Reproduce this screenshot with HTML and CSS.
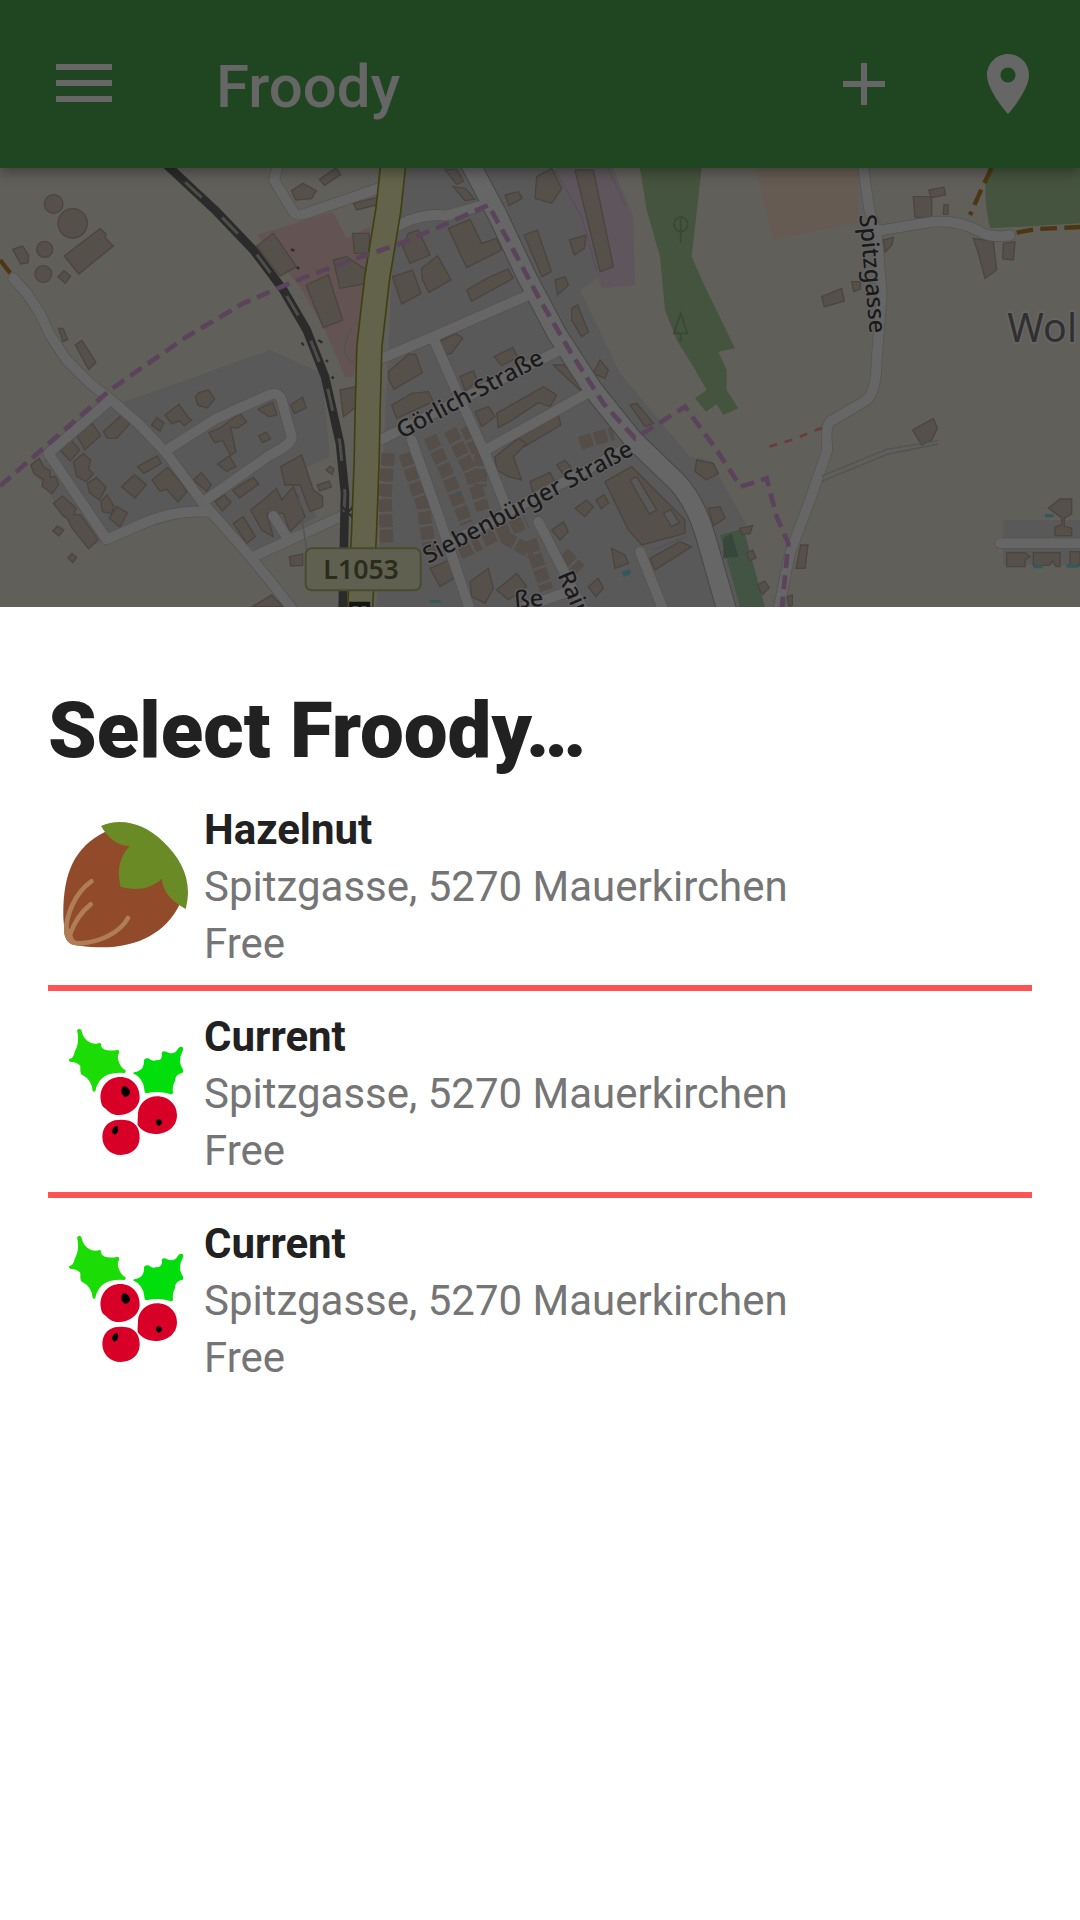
FILE: index.html
```html
<!DOCTYPE html>
<html lang="en">
<head>
<meta charset="utf-8">
<meta name="viewport" content="width=device-width, initial-scale=1">
<title>Froody</title>
<link rel="stylesheet" href="styles.css">
</head>
<body>
<div class="app">
  <header class="toolbar">
    <button class="icon-button menu-button" type="button" aria-label="Menu">
      <svg class="icon" viewBox="0 0 72 72"><path d="M8 16h56v6H8zM8 32h56v6H8zM8 48h56v6H8z"/></svg>
    </button>
    <h1 class="app-title">Froody</h1>
    <button class="icon-button" type="button" aria-label="Add">
      <svg class="icon" viewBox="0 0 24 24"><path d="M19 13h-6v6h-2v-6H5v-2h6V5h2v6h6v2z"/></svg>
    </button>
    <button class="icon-button" type="button" aria-label="My location">
      <svg class="icon" viewBox="0 0 24 24"><path d="M12 2C8.130 2 5 5.130 5 9c0 5.250 7 13 7 13s7-7.750 7-13c0-3.870-3.130-7-7-7zm0 9.500c-1.380 0-2.500-1.120-2.500-2.500s1.120-2.500 2.500-2.500 2.500 1.120 2.500 2.500-1.120 2.500-2.500 2.500z"/></svg>
    </button>
  </header>

  <div class="map">
    <svg class="map-canvas" viewBox="0 24 3240 1317" preserveAspectRatio="xMinYMin slice" role="img" aria-label="Map of Mauerkirchen">
      <defs>
        <g id="roads-minor">
          <path d="M40 355L80 400L120 460L150 525L200 600L270 670L340 725L420 795L500 880L610 1030L760 1200L880 1350"/>
          <path d="M325 725L145 880L320 1138L430 1090Q520 1050 620 1055"/>
          <path d="M500 870L650 775L800 708Q835 690 845 720L875 830Q880 850 810 885L615 1022"/>
          <path d="M760 1190L1060 1052M820 1068L860 1130"/>
          <path d="M835 10L822 60L880 155Q890 170 920 160L1150 80"/>
          <path d="M1170 210Q1260 155 1340 167L1450 135"/>
          <path d="M1130 602L1300 530L1590 403"/>
          <path d="M1300 535L1375 705L1455 880L1520 1045"/>
          <path d="M1130 845L1680 570M1460 868L1770 695"/>
          <path d="M1235 840L1320 1080L1410 1350M1340 1155L1890 860M1615 1085L1700 1250L1750 1350M1560 1345L1720 1290"/>
          <path d="M1920 1175L1990 1350"/>
          <path d="M2588 10L2608 150L2630 220L2645 400L2630 600Q2630 690 2600 720L2490 785Q2475 800 2482 870L2430 1020L2370 1180L2335 1350"/>
          <path d="M2620 215L2800 185Q2880 180 2940 215Q2970 235 3030 226"/>
          <path d="M3000 1150H3260"/>
        </g>
        <path id="road-major" d="M1410 10L1490 160L1580 350L1670 520L1780 690L1900 840L2030 965Q2090 1030 2120 1140L2180 1350"/>
        <path id="road-state" d="M1180 10L1165 150L1132 350L1108 560L1103 750L1100 900L1092 1120L1080 1350"/>
      </defs>

      <rect class="land" y="24" width="3240" height="1317"/>
      <path class="residential" d="M390 720L810 570L965 640L990 890L900 930L950 1070L770 1175L620 1050L320 1140L265 1160L95 930L330 735z"/>
      <path class="residential" d="M1190 24H1670L1800 350L1740 390L1860 640L2070 890L2130 900L2240 1095L2160 1125L2220 1341H1130z"/>
      <path class="residential" d="M3010 1080H3240V1215H3010z"/>
      <path class="commercial" d="M1670 24H1840L1900 170L1905 375L1805 385z"/>
      <path class="retail" d="M770 225L1000 155L1040 235L1110 200L1100 400L1060 650H1035L975 510L900 380z"/>
      <path class="forest" d="M1920 24H2105L2075 290L2110 370L2205 565L2155 575L2180 630V690L2215 745L2170 765L2150 732L2118 755L2085 715L2120 690L2080 620L2030 540L1995 450L1980 290L1940 150z"/>
      <path class="forest" d="M2965 24H3240V190L2970 205Q2945 90 2965 24z"/>
      <path class="orchard" d="M2265 24H2575V185L2320 240z"/>
      <path class="park" d="M2160 1125L2230 1105L2295 1341H2220z"/>
      <path class="park-dark" d="M2170 1135L2195 1120L2215 1190L2170 1195z"/>
      <path class="tree" d="M2042 248V170M2042 215A20 22 0 1 1 2043 215M2042 545V520M2042 460L2022 520H2062z"/>

      <g class="building">
        <circle cx="161" cy="132" r="28"/><circle cx="218" cy="190" r="44"/><circle cx="134" cy="268" r="24"/><circle cx="130" cy="342" r="25"/>
        <path d="M38 268l30-10 18 28-2 22-22 4zM174 350l18-18 20 16-16 22zM193 288L300 206L318 222L316 234L340 258L236 342z"/>
        <path d="M175 505l14 0 14 34-14 6zM226 555l20-14 42 66-22 22zM158 1112l15-14 18 12-14 18zM204 1194l12-14 14 12-12 16z"/>
        <path d="M586 712l10-14 30-8 18 26-22 28-28-8zM495 765l42-32 28 40 10 8-22 16-14-14-24 8zM455 795l15-22 22 16-12 24z"/>
        <path d="M230 825l46-36 26 38-48 42zM175 865l30-34 34 38-28 34zM310 815L365 765L390 790L350 835H322z"/>
        <path d="M220 905l30-24 22 18-6 28 14 14-22 24-28-16zM262 970l28-18 28 30-20 38-30-22zM302 1025l20-20 20 34-8 22-26-6zM328 1075l22-36 32 20-22 42z"/>
        <path d="M92 915l26-20 14 28 18 8 0 22 16-4 10 24-20 28-30-22 4-20-28-18zM160 1030l28-22 40 36-6 20 20 0 18 26 34 50-28 26-50-62-14-28-12-8z"/>
        <path d="M365 980l38-36 36 30-34 40zM412 920l60-32 12 22-52 30zM456 960l46-38 40 44 18 30-26 30-34-38-20 6zM580 960l24-22 30 36-14 20z"/>
        <path d="M626 818l34-14 60-44 20 26-28 18-20-2 16 74-16 10-24-44-24 6zM652 912l36-24 20 32-28 14zM776 828l22-12 14 20-24 12zM774 748l44-22 12 40-24 4zM872 735l36-24 10 32-34 18z"/>
        <path d="M645 1025l28-20 20 22-26 26zM698 990l62-38 16 20-58 42zM842 920L905 885L940 990L968 1010V1040L930 1055L900 975L855 975zM752 1050L790 1020L830 985L845 1020L880 980L915 1070L870 1115L850 1060L800 1060L820 1130L785 1110z"/>
        <path d="M700 1090l30-20 36 60-26 20zM868 1190l40-8v34l-36 2zM952 975l36-12 6 18-36 12zM978 930l12-12 12 8-6 18zM755 1341L815 1305L850 1341z"/>
        <path d="M770 258L820 220L890 320L840 348zM918 375L985 345L1028 480L970 503zM1000 300L1040 290L1100 330V370L1020 385zM875 92l34-22 40 22-14 24-48 4zM958 58l50-34 14 20-48 32z"/>
        <path d="M1058 220h50v60h-45zM1020 690l50-10v60l-40 30zM1060 130l80-20v22l-70 18zM1225 220l30-10 35 75-60 25-22-50zM1178 350l60-20 25 70-58 32zM1265 325l48-38 40 72-66 38-20-38z"/>
        <path d="M1345 205L1410 178L1445 250L1490 235L1505 270L1400 323zM1572 225l40-15 42 125-28 15zM1400 390l60-35 64-28 16 28-125 68zM1708 240l50-15-5 40-30 20zM1725 30h55L1840 320L1800 335z"/>
        <path d="M1610 50l45-25 30 60-30 45-50-15zM1515 105l40-10 12 20-40 22zM1360 80l35 5 30 32-30 5zM1335 28l35 0 20 35-20 10zM1665 360l30-10 10 25-32 30zM1715 445l18-10 32 80-20 15-30-50z"/>
        <path d="M1318 545l50-25 20 15-34 45-25 5zM1165 635l60-52 22 0 20 55-85 50-15-30zM1175 735l60-35 50-5 15 30-110 50zM1483 590l55-28 15 30-48 25zM1380 650l40-18 12 30-36 30z"/>
        <path d="M1425 755l40-15 20 30-40 30zM1490 760l140-80 40 25-20 35-35-12-75 50-45 25zM1525 825l150-60 8 30-110 65-20-15zM1660 615l30 0 65 50-15 25-55-50z"/>
        <path d="M1485 890l70-55 25 15-40 40 25 70-40-10-35-20zM1590 965l60-28 15 30-65 35zM1670 915l25-15 20 25-25 18zM1890 735l20-5 50 60-25 10zM1780 640l20-40 25 30-10 25z"/>
        <path d="M1815 965L1895 920L2055 1080V1120L1925 1155L1885 1110zM2090 900l50 10 15 30-35 20-35-25zM2125 1045l35-5 15 35-35 22zM1835 1165l40 20 10 25-40 15zM1950 1195l90-50 35 15-110 70z"/>
        <path class="yard" d="M1890 960l20-10 60 100-22 12zM1990 1060l22-12 26 40-24 12z"/>
        <path d="M1290 1225l60-25 20 50-50 30zM1410 1265l55-40 15 60-25 45-40-20zM1490 1290l60-50 30 40-55 40zM1725 1045l35-25 20 20-25 30zM1788 1020l24-16 14 24-22 18zM1655 1110l35-25 15 30-25 25zM1765 1280l30-25 15 30-22 25z"/>
        <path d="M2740 110h55v62h-50zM2787 90l45-8 5 22-45 10zM2832 135h12v28h-14zM2920 235L2980 245L2990 330L2955 355L2935 280zM3010 250l35-5-5 55-32-4zM2650 240l30-8-4 22-20 22zM2465 410l60-25 8 38-60 18zM2555 365h26v22l-20 8z"/>
        <path d="M2738 810L2800 775L2812 805L2795 840L2765 855zM2388 1225L2402 1155H2424L2415 1225zM2218 1105l40-8-8 24-22 2zM2240 1180l18-10 10 24-20 8zM2272 1275l22-12 14 20-20 20z"/>
        <path d="M3145 1045l35-28h35v45l-22 12 0 25 22 6v22h-50v-26l20-6v-22zM3020 1178h55l15 12-15 10v20h-55zM3100 1178h80v42h-12l-10-18-10 14h-48zM3210 1175h30v42h-30zM2362 1310l15-5v30l-10 5z"/>
      </g>
      <g class="houses">
        <path d="M1165 880L1155 1010L1160 1150M1215 880L1270 1040L1290 1180M1290 830L1345 950L1400 1090M1350 810L1410 930L1450 1050M1400 800L1440 890"/>
        <path d="M1450 1140L1580 1085M1590 1140L1640 1290M1690 1180L1740 1230M1740 850L1840 820M1445 880L1440 980M1510 1130L1600 1180M1380 1180L1440 1150"/>
      </g>
      <path class="pool" d="M1370 1000h12v8h-12zM1865 1235l25-8 2 16-22 8zM1290 1320h32v8h-32zM3135 1062h26v10h-26zM3100 1215h28v10h-28zM3200 1213h36v10h-36z"/>

      <use class="minor-casing" href="#roads-minor"/>
      <use class="major-casing" href="#road-major"/>
      <use class="minor-fill" href="#roads-minor"/>
      <use class="major-fill" href="#road-major"/>
      <path class="track" d="M2465 948L2660 868L2815 842M2465 964L2665 882L2815 852M1665 30L1745 170L1790 335M1825 24L1875 135M1960 1170L2060 1130M1055 505Q1010 580 1060 608M920 1170L895 1000"/>
      <path class="rail" d="M495 10L650 155L760 270L850 390L920 510L975 650L1020 850L1035 1000L1028 1350"/>
      <path class="rail-dash" d="M495 10L650 155L760 270L850 390L920 510L975 650L1020 850L1035 1000L1028 1120"/>
      <path class="rail-detail" d="M1022 1036l42 42M1064 1036l-42 42M905 548l6 8M955 540l12 8M978 600l6 6M995 650l6 6M873 268l10 4M890 322l8 4"/>
      <use class="state-casing" href="#road-state"/>
      <use class="state-fill" href="#road-state"/>
      <path class="boundary" d="M0 978L130 865L330 690L560 530L730 430L880 365L1020 312L1190 255L1320 200L1465 135L1540 270L1620 420L1720 590L1810 730L1905 835L2055 740L2150 870L2222 980L2300 955L2330 1070L2365 1150L2345 1350"/>
      <path class="path-brown" d="M0 300L35 345M2975 24L2950 75L2910 165M3050 218L3110 207L3240 201"/>
      <path class="path-red" d="M2308 860L2380 838L2475 800"/>

      <rect class="shield" x="917" y="1165" width="345" height="126" rx="18"/>
      <text class="shield-text" x="970" y="1258">L1053</text>
      <text class="ref-text" transform="translate(1048 1318) rotate(90)">E</text>
      <text class="street" transform="translate(1205 838) rotate(-28)">Görlich-Straße</text>
      <text class="street" transform="translate(1285 1212) rotate(-28)">Siebenbürger Straße</text>
      <text class="street" transform="translate(2578 165) rotate(85)">Spitzgasse</text>
      <text class="street" transform="translate(1672 1245) rotate(67)">Rain</text>
      <text class="street" transform="translate(1545 1345) rotate(-5)">ße</text>
      <text class="place" x="3022" y="545">Wol</text>
    </svg>
  </div>

  <main class="sheet">
    <h2 class="sheet-title">Select Froody…</h2>
    <ul class="entries">
      <li class="entry">
        <button class="entry-button" type="button">
          <svg class="entry-icon" viewBox="69 63 378 378" aria-hidden="true">
            <path fill="#914b2b" d="M196 92C100 140 68 220 70 350L74 400C80 425 90 432 120 434C260 455 370 410 418 312L330 150z"/>
            <path fill="#698a25" d="M183 75C240 50 310 65 370 122C430 180 458 245 437 324C395 300 366 270 366 233C330 265 290 270 242 257C230 210 238 168 269 135C235 135 207 115 183 75z"/>
            <path fill="none" stroke="#b07e55" stroke-width="14" stroke-linecap="round" d="M154 241C105 275 76 345 79 395C84 420 96 427 120 427C180 424 240 395 264 351M152 310C120 335 100 370 88 405"/>
            <path fill="#b07e55" d="M72 365L74 400C80 425 95 433 122 434L102 415L90 385z"/>
          </svg>
          <span class="entry-text">
            <span class="entry-name">Hazelnut</span>
            <span>Spitzgasse, 5270 Mauerkirchen</span>
            <span>Free</span>
          </span>
        </button>
      </li>
      <li class="entry">
        <button class="entry-button" type="button">
          <svg class="entry-icon" viewBox="69 84 378 378" aria-hidden="true"><use href="#holly"/></svg>
          <span class="entry-text">
            <span class="entry-name">Current</span>
            <span>Spitzgasse, 5270 Mauerkirchen</span>
            <span>Free</span>
          </span>
        </button>
      </li>
      <li class="entry">
        <button class="entry-button" type="button">
          <svg class="entry-icon" viewBox="69 84 378 378" aria-hidden="true">
            <g id="holly">
              <path fill="#1bdc05" d="M111 88Q118 80 124 87Q130 118 155 127Q172 130 179 125Q185 127 184 138Q196 154 234 146Q240 150 236 158Q230 170 238 186Q244 202 256 207Q259 212 254 216Q205 212 184 234Q170 248 166 270Q162 274 158 270Q156 236 126 221Q120 220 121 195Q110 182 92 183Q84 178 88 174Q102 170 104 152Q120 125 111 88z"/>
              <path fill="#00df0b" d="M279 217Q280 212 290 212Q314 206 312 178Q314 170 325 172Q335 182 348 178Q370 178 365 155Q370 148 380 153Q402 164 414 143Q418 136 427 138Q432 142 428 150Q412 180 428 204Q432 210 428 215Q404 220 405 240Q396 256 399 276Q396 282 388 278Q355 268 319 277Q313 276 313 265Q309 230 279 217z"/>
              <path fill="#d80027" d="M241 228C276 228 300 255 299 290C298 322 265 342 235 342C218 342 206 334 198 324C185 316 184 308 182 296C178 258 204 228 241 228zM351 286C386 286 412 312 411 344C410 378 380 399 347 399C322 399 304 388 293 372C292 360 294 350 294 336C296 308 322 286 351 286zM224 358Q244 354 268 359C290 368 300 386 299 412C298 442 274 462 242 462C210 462 187 438 187 408C187 382 202 364 224 358z"/>
              <path fill="#000" d="M247 258Q252 254 260 258Q270 265 270 276Q266 288 254 287Q242 278 244 268zM347 362Q350 354 358 355Q366 357 366 366Q362 376 355 374Q348 370 347 362zM218 383Q222 375 232 374Q238 384 231 396Q226 402 221 400Q214 394 218 383z"/>
            </g>
          </svg>
          <span class="entry-text">
            <span class="entry-name">Current</span>
            <span>Spitzgasse, 5270 Mauerkirchen</span>
            <span>Free</span>
          </span>
        </button>
      </li>
    </ul>
  </main>
</div>
</body>
</html>
```
FILE: styles.css
```css
* {
  box-sizing: border-box;
}

body {
  margin: 0;
  background: #fff;
  color: #212121;
  font-family: Roboto, "Noto Sans", sans-serif;
}

button {
  margin: 0;
  padding: 0;
  border: 0;
  background: none;
  color: inherit;
  font: inherit;
  cursor: pointer;
}

.app {
  display: flex;
  flex-direction: column;
  min-height: 100vh;
}

/* Toolbar */
.toolbar {
  position: relative;
  z-index: 1;
  display: flex;
  align-items: center;
  height: 168px;
  padding: 0 36px 0 48px;
  background: #1f4621;
  color: #666;
  box-shadow: 0 4px 12px rgba(0, 0, 0, 0.35);
}

.icon-button {
  width: 72px;
  height: 72px;
  margin-left: 72px;
}

.menu-button {
  margin-left: 0;
}

.icon {
  display: block;
  width: 72px;
  height: 72px;
  fill: currentColor;
}

.app-title {
  flex: 1;
  margin: 0;
  padding: 6px 0 0 96px;
  font-size: 60px;
  font-weight: 500;
  line-height: 72px;
}

/* Map */
.map {
  aspect-ratio: 1080 / 439;
  overflow: hidden;
  background: #615f5a;
}

.map-canvas {
  display: block;
  width: 100%;
  height: 100%;
  font-family: "Noto Sans", sans-serif;
}

.land { fill: #615f5a; }
.residential { fill: #595959; }
.commercial { fill: #5e565c; }
.retail { fill: #635453; }
.forest { fill: #45543e; }
.orchard { fill: #655b53; }
.park { fill: #435344; }
.park-dark { fill: #364839; }
.tree { fill: none; stroke: #394834; stroke-width: 5; }
.building { fill: #56504b; stroke: #4c443f; stroke-width: 4; }
.yard { fill: #595959; }
.houses { fill: none; stroke: #544d48; stroke-width: 40; stroke-dasharray: 38 8; }
.pool { fill: #33595b; }

.minor-casing,
.minor-fill,
.major-casing,
.major-fill,
.state-casing,
.state-fill {
  fill: none;
  stroke-linecap: round;
  stroke-linejoin: round;
}

.minor-casing { stroke: #525252; stroke-width: 34; }
.minor-fill { stroke: #666; stroke-width: 30; }
.major-casing { stroke: #474747; stroke-width: 62; }
.major-fill { stroke: #666; stroke-width: 56; }
.state-casing { stroke: #3f4012; stroke-width: 80; }
.state-fill { stroke: #62634a; stroke-width: 70; }
.track { fill: none; stroke: #515356; stroke-width: 4; }
.rail { fill: none; stroke: #2b2b2b; stroke-width: 26; }
.rail-dash { fill: none; stroke: #4d4d4c; stroke-width: 9; stroke-dasharray: 68 85; stroke-dashoffset: 70; }
.rail-detail { fill: none; stroke: #2c2c2c; stroke-width: 7; }
.boundary { fill: none; stroke: #5a435b; stroke-width: 14; stroke-dasharray: 42 22; }
.path-brown { fill: none; stroke: #4c3712; stroke-width: 13; stroke-dasharray: 50 22; }
.path-red { fill: none; stroke: #693c37; stroke-width: 8; stroke-dasharray: 24 24; }

.shield { fill: #5f6050; stroke: #494a31; stroke-width: 6; }
.shield-text { fill: #2b2c1c; font-size: 80px; font-weight: 600; }
.ref-text { fill: #151515; font-size: 84px; font-weight: 700; }

.street,
.place {
  paint-order: stroke;
  stroke: #666;
  stroke-linejoin: round;
}

.street { fill: #1a1a1a; font-size: 71px; font-weight: 500; stroke-width: 6; }
.place { fill: #303030; font-size: 118px; stroke-width: 10; }

/* Bottom sheet */
.sheet {
  flex: 1;
  padding: 76px 48px 48px;
  background: #fff;
}

.sheet-title {
  margin: 0 0 5px;
  font-size: 78px;
  font-weight: 900;
  line-height: 96px;
}

.entries {
  margin: 0;
  padding: 0;
  list-style: none;
}

.entry + .entry {
  border-top: 6px solid #ff5252;
}

.entry-button {
  display: flex;
  align-items: center;
  gap: 15px;
  width: 100%;
  padding: 13px 15px;
  text-align: left;
}

.entry-icon {
  flex: none;
  width: 126px;
  height: 126px;
}

.entry-text {
  display: flex;
  flex-direction: column;
  padding-top: 4px;
  color: #757575;
  font-size: 42px;
  line-height: 57px;
}

.entry-name {
  color: #212121;
  font-weight: 700;
}
```
